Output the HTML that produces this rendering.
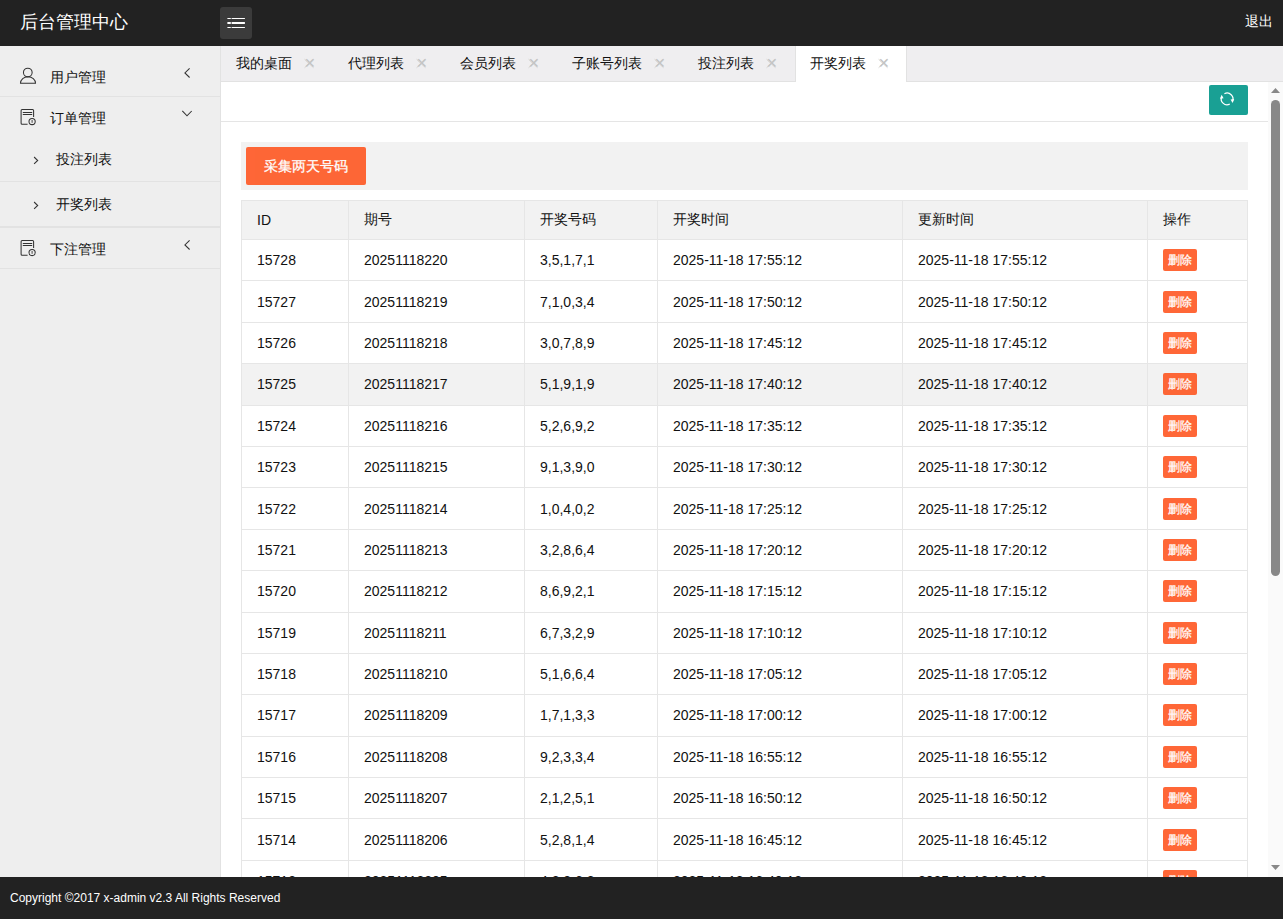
<!DOCTYPE html>
<html><head><meta charset="utf-8">
<style>
*{margin:0;padding:0;box-sizing:content-box}
html,body{width:1283px;height:919px;overflow:hidden;background:#fff;font-family:"Liberation Sans",sans-serif;font-size:14px;color:#111}
.header{position:absolute;left:0;top:0;width:1283px;height:46px;background:#222}
.logo{position:absolute;left:20px;top:0;line-height:45px;font-size:18px;color:#fff}
.lopen{position:absolute;left:220px;top:7px;width:32px;height:32px;border-radius:3px;background:#3b3b3b}
.logout{position:absolute;right:10px;top:-1px;line-height:45px;font-size:14px;color:#fff}
.side{position:absolute;left:0;top:46px;width:220px;bottom:42px;background:#eee;border-right:1px solid #e2e2e2}
.ln{position:absolute;left:0;width:220px;height:1px;background:#e2e2e2}
.side .t{position:absolute;line-height:20px;white-space:nowrap}
svg{position:absolute;overflow:visible}
.page{position:absolute;left:221px;top:46px;right:0;bottom:42px;background:#fff}
.tabs{position:absolute;left:0;top:0;right:0;height:35px;background:#efeef0;border-bottom:1px solid #e2e2e2}
.tab{position:absolute;top:0;height:35px;line-height:35px}
.tab .x{position:absolute;top:0;color:#c2c2c2}
.tab.on{background:#fff;height:36px;border-left:1px solid #e2e2e2;border-right:1px solid #e2e2e2}
.frame{position:absolute;left:0;top:36px;right:0;bottom:0;overflow:hidden}
.xnav{position:absolute;left:0;top:0;width:1047px;height:39px;border-bottom:1px solid #e5e5e5}
.refresh{position:absolute;left:988px;top:3px;width:39px;height:30px;background:#009688;border-radius:2px;opacity:.9}
.xblock{position:absolute;left:20px;top:60px;width:1007px;height:48px;background:#f2f2f2}
.btn{position:absolute;left:5px;top:5px;width:120px;height:38px;line-height:38px;background:#ff5722;color:#fff;text-align:center;border-radius:2px;opacity:.9;-webkit-text-stroke:0.3px #fff}
table{position:absolute;left:20px;top:118px;width:1006px;border-collapse:collapse;table-layout:fixed}
td,th{border:1px solid #e6e6e6;padding:0 15px;text-align:left;font-weight:normal;font-size:14px}
thead tr{height:39px}
tbody tr{height:41.4px}
thead tr{background:#f2f2f2}
tr.hov{background:#f2f2f2}
.del{display:inline-block;height:22px;line-height:22px;padding:0 5px;font-size:12px;background:#ff5722;color:#fff;border-radius:2px;vertical-align:middle;opacity:.9;-webkit-text-stroke:0.25px #fff}
.sb{position:absolute;left:1047px;top:0;width:15px;bottom:0;background:#fafafa}
.footer{position:absolute;left:0;bottom:0;width:1283px;height:42px;background:#222}
.copy{position:absolute;left:10px;top:0;line-height:42px;font-size:12px;color:#fff}
</style></head><body>
<div class="header">
  <div class="logo">后台管理中心</div>
  <div class="lopen"></div>
  <div class="logout">退出</div>
</div>
<div class="side">
  <div class="ln" style="top:50px"></div>
  <div class="ln" style="top:135px"></div>
  <div class="ln" style="top:180px"></div>
  <div class="ln" style="top:181px"></div>
  <div class="ln" style="top:222px"></div>
  <span class="t" style="left:50px;top:21px">用户管理</span>
  <span class="t" style="left:50px;top:62px">订单管理</span>
  <span class="t" style="left:56px;top:103px">投注列表</span>
  <span class="t" style="left:56px;top:148px">开奖列表</span>
  <span class="t" style="left:50px;top:193px">下注管理</span>
</div>
<div class="page">
  <div class="tabs">
    <div class="tab" style="left:0;width:112px"><span style="position:absolute;left:15px">我的桌面</span><span class="x" style="left:83px">✕</span></div>
    <div class="tab" style="left:112px;width:112px"><span style="position:absolute;left:15px">代理列表</span><span class="x" style="left:83px">✕</span></div>
    <div class="tab" style="left:224px;width:112px"><span style="position:absolute;left:15px">会员列表</span><span class="x" style="left:83px">✕</span></div>
    <div class="tab" style="left:336px;width:126px"><span style="position:absolute;left:15px">子账号列表</span><span class="x" style="left:97px">✕</span></div>
    <div class="tab" style="left:462px;width:112px"><span style="position:absolute;left:15px">投注列表</span><span class="x" style="left:83px">✕</span></div>
    <div class="tab on" style="left:574px;width:110px"><span style="position:absolute;left:14px">开奖列表</span><span class="x" style="left:82px">✕</span></div>
  </div>
  <div class="frame">
    <div class="xnav"><div class="refresh"></div></div>
    <div class="xblock"><div class="btn">采集两天号码</div></div>
    <table>
      <colgroup><col style="width:107px"><col style="width:176px"><col style="width:133px"><col style="width:245px"><col style="width:245px"><col style="width:100px"></colgroup>
      <thead><tr><th>ID</th><th>期号</th><th>开奖号码</th><th>开奖时间</th><th>更新时间</th><th>操作</th></tr></thead>
      <tbody>
<tr><td>15728</td><td>20251118220</td><td>3,5,1,7,1</td><td>2025-11-18 17:55:12</td><td>2025-11-18 17:55:12</td><td><span class="del">删除</span></td></tr>
<tr><td>15727</td><td>20251118219</td><td>7,1,0,3,4</td><td>2025-11-18 17:50:12</td><td>2025-11-18 17:50:12</td><td><span class="del">删除</span></td></tr>
<tr><td>15726</td><td>20251118218</td><td>3,0,7,8,9</td><td>2025-11-18 17:45:12</td><td>2025-11-18 17:45:12</td><td><span class="del">删除</span></td></tr>
<tr class="hov"><td>15725</td><td>20251118217</td><td>5,1,9,1,9</td><td>2025-11-18 17:40:12</td><td>2025-11-18 17:40:12</td><td><span class="del">删除</span></td></tr>
<tr><td>15724</td><td>20251118216</td><td>5,2,6,9,2</td><td>2025-11-18 17:35:12</td><td>2025-11-18 17:35:12</td><td><span class="del">删除</span></td></tr>
<tr><td>15723</td><td>20251118215</td><td>9,1,3,9,0</td><td>2025-11-18 17:30:12</td><td>2025-11-18 17:30:12</td><td><span class="del">删除</span></td></tr>
<tr><td>15722</td><td>20251118214</td><td>1,0,4,0,2</td><td>2025-11-18 17:25:12</td><td>2025-11-18 17:25:12</td><td><span class="del">删除</span></td></tr>
<tr><td>15721</td><td>20251118213</td><td>3,2,8,6,4</td><td>2025-11-18 17:20:12</td><td>2025-11-18 17:20:12</td><td><span class="del">删除</span></td></tr>
<tr><td>15720</td><td>20251118212</td><td>8,6,9,2,1</td><td>2025-11-18 17:15:12</td><td>2025-11-18 17:15:12</td><td><span class="del">删除</span></td></tr>
<tr><td>15719</td><td>20251118211</td><td>6,7,3,2,9</td><td>2025-11-18 17:10:12</td><td>2025-11-18 17:10:12</td><td><span class="del">删除</span></td></tr>
<tr><td>15718</td><td>20251118210</td><td>5,1,6,6,4</td><td>2025-11-18 17:05:12</td><td>2025-11-18 17:05:12</td><td><span class="del">删除</span></td></tr>
<tr><td>15717</td><td>20251118209</td><td>1,7,1,3,3</td><td>2025-11-18 17:00:12</td><td>2025-11-18 17:00:12</td><td><span class="del">删除</span></td></tr>
<tr><td>15716</td><td>20251118208</td><td>9,2,3,3,4</td><td>2025-11-18 16:55:12</td><td>2025-11-18 16:55:12</td><td><span class="del">删除</span></td></tr>
<tr><td>15715</td><td>20251118207</td><td>2,1,2,5,1</td><td>2025-11-18 16:50:12</td><td>2025-11-18 16:50:12</td><td><span class="del">删除</span></td></tr>
<tr><td>15714</td><td>20251118206</td><td>5,2,8,1,4</td><td>2025-11-18 16:45:12</td><td>2025-11-18 16:45:12</td><td><span class="del">删除</span></td></tr>
<tr><td>15713</td><td>20251118205</td><td>4,2,3,6,8</td><td>2025-11-18 16:40:12</td><td>2025-11-18 16:40:12</td><td><span class="del">删除</span></td></tr>
      </tbody>
    </table>
    <div class="sb">
      <svg width="15" height="795" style="left:0;top:0">
        <path d="M3,10.9 L12,10.9 L7.5,6 Z" fill="#888"/>
        <rect x="3" y="18" width="9" height="476" rx="4.5" fill="#888"/>
        <path d="M3,783 L12,783 L7.5,788 Z" fill="#888"/>
      </svg>
    </div>
  </div>
</div>
<svg width="1283" height="919" style="left:0;top:0;pointer-events:none" viewBox="0 0 1283 919">
  <!-- hamburger -->
  <g fill="#fff">
    <rect x="227.4" y="18" width="3.4" height="1"/><rect x="231.6" y="18" width="13.3" height="1"/>
    <rect x="227.4" y="22" width="3.4" height="2"/><rect x="231.6" y="22" width="13.3" height="2"/>
    <rect x="227.4" y="27" width="3.4" height="1"/><rect x="231.6" y="27" width="13.3" height="1"/>
  </g>
  <g fill="none" stroke="#333" stroke-width="1.05">
    <!-- user -->
    <circle cx="27.8" cy="72.5" r="4.35"/>
    <path d="M20.5,83.3 A7.5,6.6 0 0 1 35.5,83.3 Z"/>
    <!-- doc 1 -->
    <path d="M27.6,124.3 H22.1 Q21.1,124.3 21.1,123.3 V110.4 Q21.1,109.4 22.1,109.4 H32.6 Q33.6,109.4 33.6,110.4 V117"/>
    <path d="M22.8,112.4 H32.2 M22.8,114.5 H32.2"/>
    <circle cx="32.1" cy="121.5" r="3.1"/>
    <path d="M32.1,120 V122.8" stroke-width="0.9"/>
    <!-- doc 2 -->
    <g transform="translate(0,131)">
    <path d="M27.6,124.3 H22.1 Q21.1,124.3 21.1,123.3 V110.4 Q21.1,109.4 22.1,109.4 H32.6 Q33.6,109.4 33.6,110.4 V117"/>
    <path d="M22.8,112.4 H32.2 M22.8,114.5 H32.2"/>
    <circle cx="32.1" cy="121.5" r="3.1"/>
    <path d="M32.1,120 V122.8" stroke-width="0.9"/>
    </g>
    <!-- arrows -->
    <path d="M189.6,68.3 L184.9,73 L189.6,77.5"/>
    <path d="M182.3,110.9 L187,115.8 L191.7,111"/>
    <path d="M189.6,240.3 L184.9,245 L189.6,249.5"/>
    <path d="M34.1,157 L37.7,160.5 L34.1,163.9"/>
    <path d="M34.1,202 L37.7,205.5 L34.1,208.9"/>
  </g>
  <!-- tab close -->
  <g stroke="#c8c8c8" stroke-width="0.8" fill="none">
    <path d="M304.6,59.3 L313.5,67.7 M313.5,59.3 L304.6,67.7"/>
    <path d="M416.6,59.3 L425.5,67.7 M425.5,59.3 L416.6,67.7"/>
    <path d="M528.6,59.3 L537.5,67.7 M537.5,59.3 L528.6,67.7"/>
    <path d="M654.6,59.3 L663.5,67.7 M663.5,59.3 L654.6,67.7"/>
    <path d="M766.6,59.3 L775.5,67.7 M775.5,59.3 L766.6,67.7"/>
    <path d="M878.6,59.3 L887.5,67.7 M887.5,59.3 L878.6,67.7"/>
  </g>
  <!-- refresh -->
  <g stroke="#fff" stroke-width="1.25" fill="none">
    <path d="M1224.4,93.8 A5.8,5.8 0 0 1 1232.4,101.4"/>
    <path d="M1229.8,104 A5.8,5.8 0 0 1 1221.8,96.4"/>
  </g>
  <g fill="#fff">
    <path d="M1230.6,99.6 L1234.2,99.1 L1232.6,103.1 Z"/>
    <path d="M1223.6,98.2 L1220,98.7 L1221.6,94.7 Z"/>
  </g>
</svg>
<div class="footer"><div class="copy">Copyright ©2017 x-admin v2.3 All Rights Reserved</div></div>
</body></html>
